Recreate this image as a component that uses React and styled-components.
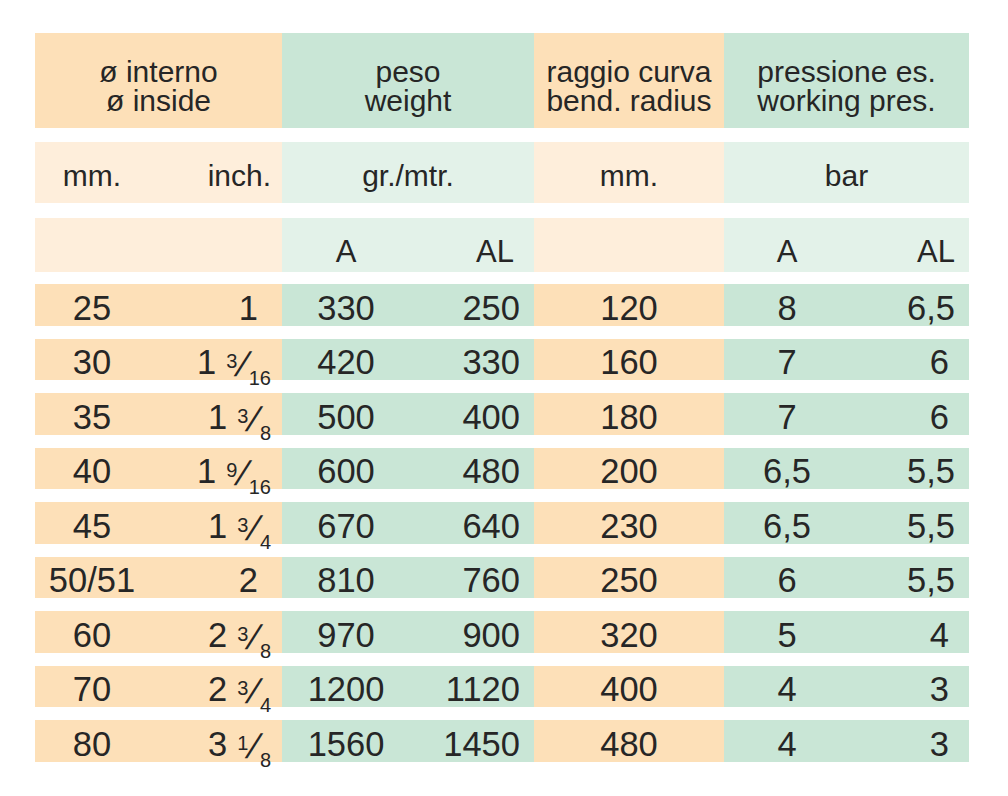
import React from 'react';
import styled, { createGlobalStyle } from 'styled-components';

const Global = createGlobalStyle`
  html, body { margin: 0; padding: 0; background: #ffffff; }
  body { font-family: "Liberation Sans", Arial, sans-serif; color: #262626; }
`;

const TONES = {
  o: '#fde0b8',
  g: '#c9e6d6',
  lo: '#feeedb',
  lg: '#e3f2e9',
};

const Table = styled.div`
  width: 934px;
  margin-left: 35px;
  padding-top: 33px;
  padding-bottom: 34px;
  display: flex;
  flex-direction: column;
`;

const Row = styled.div`
  display: grid;
  grid-template-columns: 114px 133px 128px 124px 190px 126px 119px;
  height: ${(p) => p.$h}px;
  margin-top: ${(p) => p.$mt || 0}px;
  font-size: ${(p) => p.$fs}px;
  line-height: ${(p) => p.$lh || 1};
`;

const Cell = styled.div`
  grid-column: span ${(p) => p.$span || 1};
  background: ${(p) => TONES[p.$tone]};
  display: flex;
  align-items: flex-end;
  justify-content: ${(p) => (p.$align === 'right' ? 'flex-end' : 'center')};
  text-align: ${(p) => (p.$align === 'right' ? 'right' : 'center')};
  padding-right: ${(p) => p.$pr || 0}px;
  padding-bottom: ${(p) => p.$pb || 0}px;
  white-space: nowrap;
`;

const Val = styled.span`
  display: block;
`;

const Frac = styled.span`
  margin-left: 10px;
`;

const Num = styled.span`
  font-size: 20px;
  line-height: 0;
  vertical-align: 6px;
`;

const Slash = styled.span`
  display: inline-block;
  font-size: 34px;
  line-height: 0;
  vertical-align: -2px;
  margin: 0 1px 0 1px;
  transform: skewX(-20deg);
`;

const Den = styled.span`
  font-size: 20px;
  line-height: 0;
  vertical-align: -11px;
`;

const DATA = [
  ['25', ['1'], '330', '250', '120', '8', '6,5'],
  ['30', ['1', '3', '16'], '420', '330', '160', '7', '6'],
  ['35', ['1', '3', '8'], '500', '400', '180', '7', '6'],
  ['40', ['1', '9', '16'], '600', '480', '200', '6,5', '5,5'],
  ['45', ['1', '3', '4'], '670', '640', '230', '6,5', '5,5'],
  ['50/51', ['2'], '810', '760', '250', '6', '5,5'],
  ['60', ['2', '3', '8'], '970', '900', '320', '5', '4'],
  ['70', ['2', '3', '4'], '1200', '1120', '400', '4', '3'],
  ['80', ['3', '1', '8'], '1560', '1450', '480', '4', '3'],
];

function Inch({ parts }) {
  const [whole, num, den] = parts;
  return (
    <Val>
      {whole}
      {num && (
        <Frac>
          <Num>{num}</Num>
          <Slash>/</Slash>
          <Den>{den}</Den>
        </Frac>
      )}
    </Val>
  );
}

export default function App() {
  return (
    <>
      <Global />
      <Table>
        <Row $h={95} $fs={30} $lh="28.5px">
          <Cell $span={2} $tone="o" $pb={13}>
            <Val>ø interno<br />ø inside</Val>
          </Cell>
          <Cell $span={2} $tone="g" $pb={13}>
            <Val>peso<br />weight</Val>
          </Cell>
          <Cell $tone="o" $pb={13}>
            <Val>raggio curva<br />bend. radius</Val>
          </Cell>
          <Cell $span={2} $tone="g" $pb={13}>
            <Val>pressione es.<br />working pres.</Val>
          </Cell>
        </Row>

        <Row $h={61} $mt={14} $fs={30}>
          <Cell $tone="lo" $pb={12}><Val>mm.</Val></Cell>
          <Cell $tone="lo" $align="right" $pr={11} $pb={12}><Val>inch.</Val></Cell>
          <Cell $span={2} $tone="lg" $pb={12}><Val>gr./mtr.</Val></Cell>
          <Cell $tone="lo" $pb={12}><Val>mm.</Val></Cell>
          <Cell $span={2} $tone="lg" $pb={12}><Val>bar</Val></Cell>
        </Row>

        <Row $h={54} $mt={15} $fs={31}>
          <Cell $tone="lo" />
          <Cell $tone="lo" />
          <Cell $tone="lg" $pb={5.5}><Val>A</Val></Cell>
          <Cell $tone="lg" $align="right" $pr={20} $pb={5.5}><Val>AL</Val></Cell>
          <Cell $tone="lo" />
          <Cell $tone="lg" $pb={5.5}><Val>A</Val></Cell>
          <Cell $tone="lg" $align="right" $pr={14} $pb={5.5}><Val>AL</Val></Cell>
        </Row>

        {DATA.map((r, i) => (
          <Row key={r[0]} $h={41.5} $mt={i === 0 ? 12 : 13} $fs={34.5}>
            <Cell $tone="o" $pb={0.5}><Val>{r[0]}</Val></Cell>
            <Cell $tone="o" $align="right" $pr={r[1].length > 1 ? 11 : 24} $pb={0.5}>
              <Inch parts={r[1]} />
            </Cell>
            <Cell $tone="g" $pb={0.5}><Val>{r[2]}</Val></Cell>
            <Cell $tone="g" $align="right" $pr={14} $pb={0.5}><Val>{r[3]}</Val></Cell>
            <Cell $tone="o" $pb={0.5}><Val>{r[4]}</Val></Cell>
            <Cell $tone="g" $pb={0.5}><Val>{r[5]}</Val></Cell>
            <Cell $tone="g" $align="right" $pr={r[6].includes(',') ? 14 : 20} $pb={0.5}>
              <Val>{r[6]}</Val>
            </Cell>
          </Row>
        ))}
      </Table>
    </>
  );
}
